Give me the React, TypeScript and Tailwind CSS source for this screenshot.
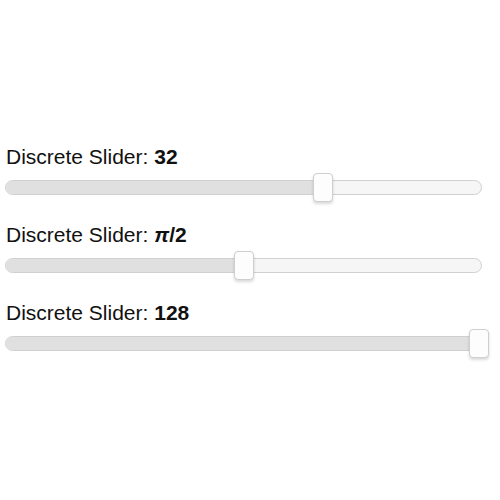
import type { ReactNode } from "react";

type SliderProps = {
  value: ReactNode;
  pct: number;
};

function DiscreteSlider({ value, pct }: SliderProps) {
  return (
    <div className="flex flex-col">
      <div className="text-[21px] leading-[24px] text-[#111] pl-[6px]">
        Discrete Slider: <span className="font-bold">{value}</span>
      </div>
      <div className="relative mt-[11px] ml-[5px] w-[477px] h-[15px] rounded-full border border-[#d0d0d0] bg-[#f6f6f6]">
        <div
          className="h-full rounded-full bg-[#e0e0e0]"
          style={{ width: `${pct}%` }}
        />
        {/* thumb sits over the track */}
        <div
          className="absolute top-[-8px] w-[20px] h-[29px] -translate-x-1/2 rounded-[4px] border border-[#cfcfcf] bg-[#fdfdfd] shadow-[0_2px_3px_rgba(0,0,0,0.15)]"
          style={{ left: `${pct}%` }}
        />
      </div>
    </div>
  );
}

export default function App() {
  return (
    <div
      className="w-[500px] h-[500px] bg-white pt-[145px] flex flex-col gap-[28px]"
      style={{ fontFamily: '"Liberation Sans", Arial, sans-serif' }}
    >
      <DiscreteSlider value="32" pct={66.7} />
      <DiscreteSlider
        value={
          <>
            <span className="italic">π</span>/2
          </>
        }
        pct={50}
      />
      <DiscreteSlider value="128" pct={99.5} />
    </div>
  );
}
